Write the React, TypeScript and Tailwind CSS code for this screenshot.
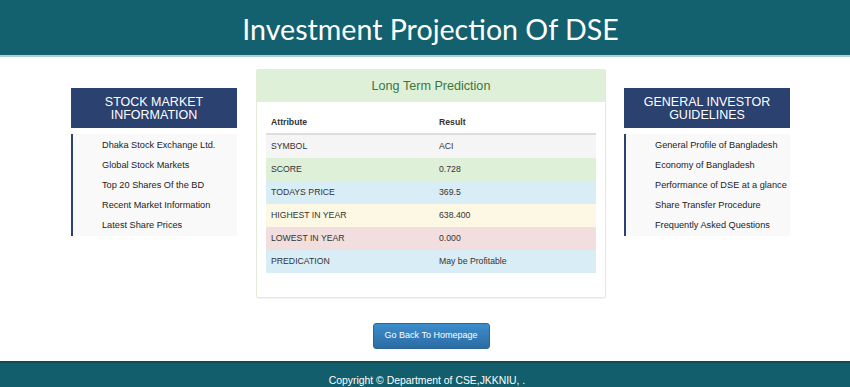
import React from "react";

const leftItems = [
  "Dhaka Stock Exchange Ltd.",
  "Global Stock Markets",
  "Top 20 Shares Of the BD",
  "Recent Market Information",
  "Latest Share Prices",
];
const rightItems = [
  "General Profile of Bangladesh",
  "Economy of Bangladesh",
  "Performance of DSE at a glance",
  "Share Transfer Procedure",
  "Frequently Asked Questions",
];

const rows: { a: string; r: string; bg: string }[] = [
  { a: "SYMBOL", r: "ACI", bg: "bg-[#f5f5f5]" },
  { a: "SCORE", r: "0.728", bg: "bg-[#dff0d8]" },
  { a: "TODAYS PRICE", r: "369.5", bg: "bg-[#d9edf7]" },
  { a: "HIGHEST IN YEAR", r: "638.400", bg: "bg-[#fcf8e3]" },
  { a: "LOWEST IN YEAR", r: "0.000", bg: "bg-[#f2dede]" },
  { a: "PREDICATION", r: "May be Profitable", bg: "bg-[#d9edf7]" },
];

function SidePanel({ title, items }: { title: string[]; items: string[] }) {
  return (
    <div className="w-[166px]">
      <div className="h-[40px] bg-[#2b4170] flex flex-col items-center justify-center text-white text-[12.5px] leading-[13px] pt-[1px]">
        {title.map((t) => (
          <div key={t}>{t}</div>
        ))}
      </div>
      <div className="mt-[6px] pt-[2px] bg-[#f9f9f9] border-l-2 border-[#2b4170] pl-[29px]">
        {items.map((i) => (
          <div key={i} className="h-[20px] flex items-center text-[9.2px] text-[#222]">
            {i}
          </div>
        ))}
      </div>
    </div>
  );
}

export default function App() {
  return (
    <div className="w-[850px] h-[387px] overflow-hidden bg-white font-['Liberation_Sans',Arial,sans-serif]">
      <header className="h-[57px] bg-[#13606e] border-b-2 border-[#b3ccd3] flex items-center justify-center pt-[4px]">
        <h1 className="text-white text-[28.6px] font-['Lato',sans-serif] tracking-[0px] ml-[11px]">
          Investment Projection Of DSE
        </h1>
      </header>
      <div className="flex pt-[12px]">
        <div className="ml-[71px] mt-[19px]">
          <SidePanel title={["STOCK MARKET", "INFORMATION"]} items={leftItems} />
        </div>
        <div className="ml-[19px] w-[350px] flex flex-col">
          <div className="border border-[#e3ecd9] rounded-[2px] shadow-[0_1px_1px_rgba(0,0,0,0.05)]">
            <div className="h-[32px] bg-[#dff0d8] flex items-center justify-center text-[#3c763d] text-[12.6px]">
              Long Term Prediction
            </div>
            <div className="px-[9px] pt-[10px] pb-[24px]">
              <div className="text-[8.7px] text-[#333]">
                <div className="flex h-[23px] items-center border-b-2 border-[#ddd] font-bold">
                  <div className="w-[173px] pl-[5px]">Attribute</div>
                  <div>Result</div>
                </div>
                {rows.map((row) => (
                  <div key={row.a} className={`flex h-[23px] items-center ${row.bg}`}>
                    <div className="w-[173px] pl-[5px]">{row.a}</div>
                    <div>{row.r}</div>
                  </div>
                ))}
              </div>
            </div>
          </div>
          <div className="flex justify-center mt-[25px]">
            <button className="w-[117px] h-[26px] rounded-[3px] border border-[#2b669a] bg-gradient-to-b from-[#3c8dce] to-[#2c6ca3] text-white text-[9px]">
              Go Back To Homepage
            </button>
          </div>
        </div>
        <div className="ml-[18px] mt-[19px]">
          <SidePanel title={["GENERAL INVESTOR", "GUIDELINES"]} items={rightItems} />
        </div>
      </div>
      <footer className="mt-[12px] h-[40px] bg-[#135e6c] border-t-2 border-[#0d4b57] flex justify-center pt-[10px] pl-[4px] text-white text-[10.4px]">
        Copyright © Department of CSE,JKKNIU, .
      </footer>
    </div>
  );
}
